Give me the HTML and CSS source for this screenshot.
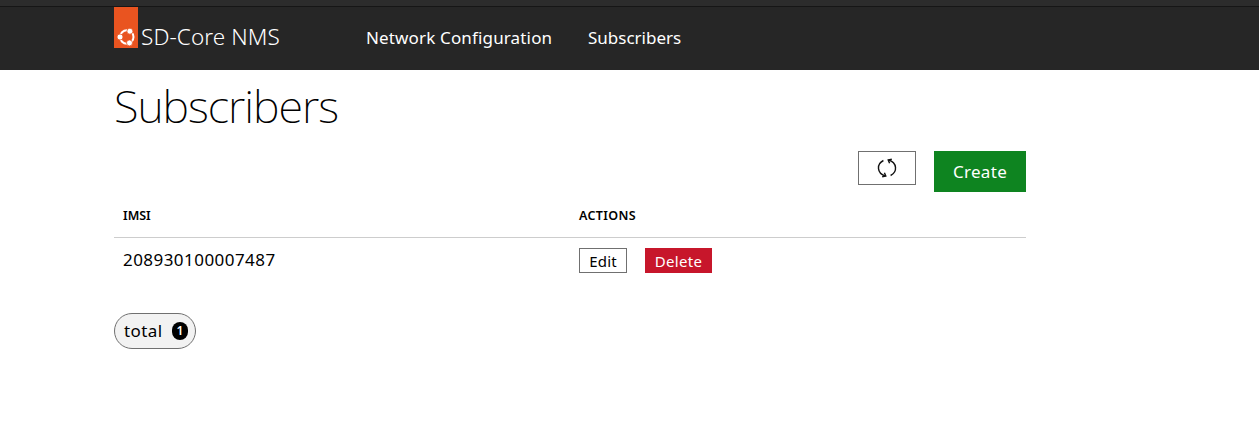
FILE: index.html
```html
<!DOCTYPE html>
<html lang="en">
<head>
<meta charset="utf-8">
<title>Subscribers</title>
<link rel="stylesheet" href="styles.css">
</head>
<body>
<div class="window-edge"></div>
<header class="navigation">
  <a class="brand">
    <span class="brand-tag">
      <svg width="20" height="20" viewBox="0 0 20 20">
        <circle cx="10.8" cy="10" r="6.7" fill="none" stroke="#fff" stroke-width="2"/>
        <g fill="#fff" stroke="#e95420" stroke-width="0.8">
          <circle cx="4" cy="10" r="3"/>
          <circle cx="13.9" cy="4.2" r="3"/>
          <circle cx="13.5" cy="15.9" r="3"/>
        </g>
      </svg>
    </span>
    <span class="brand-title">SD-Core NMS</span>
  </a>
  <nav class="links">
    <a class="link-network">Network Configuration</a>
    <a class="link-subscribers">Subscribers</a>
  </nav>
</header>
<main class="content">
  <h1>Subscribers</h1>
  <div class="toolbar">
    <button class="button refresh" aria-label="Refresh">
      <svg width="20" height="20" viewBox="0 0 20 20" fill="none" stroke="#111" stroke-width="1.4">
        <path d="M6.4 2.5C-.6 6-.4 15.4 8.6 18M13.6 17.5C20.6 14 20.4 4.6 11.4 2"/>
        <path d="M7.4 14.8L8.8 17.9L5.2 18.8M12.6 5.2L11.2 2.1L14.8 1.2"/>
      </svg>
    </button>
    <button class="button create"><span>Create</span></button>
  </div>
  <table class="table">
    <thead><tr><th class="th-imsi">IMSI</th><th class="th-actions">ACTIONS</th></tr></thead>
    <tbody><tr>
      <td><span class="imsi">208930100007487</span></td>
      <td><div class="actions"><button class="button small edit">Edit</button><button class="button small delete">Delete</button></div></td>
    </tr></tbody>
  </table>
  <div class="chip"><span class="chip-label">total</span><span class="badge">1</span></div>
</main>
</body>
</html>
```
FILE: styles.css
```css
* { box-sizing: border-box; }
body {
  margin: 0;
  background: #fff;
  color: #000;
  font-family: "Noto Sans", "Open Sans", sans-serif;
  font-size: 17px;
  line-height: 24px;
  white-space: nowrap;
}
.window-edge { height: 7px; background: #2c2c2c; border-bottom: 1px solid #161616; }
.navigation { display: flex; height: 63px; padding-left: 114px; background: #262626; color: #fff; }
.brand { display: flex; width: 252px; }
.brand-tag { display: flex; align-items: flex-end; justify-content: center; width: 24px; height: 41px; padding-bottom: 1px; background: #e95420; }
.brand-title { margin: 18px 0 0 3px; font-size: 22.5px; font-weight: 300; letter-spacing: 0.1px; }
.links { display: flex; padding-top: 19px; }
.link-network { width: 222px; letter-spacing: 0.15px; }
.content { width: 912px; margin-left: 114px; }
h1 { height: 81px; margin: 0; padding-top: 7px; font-size: 45px; line-height: 58px; font-weight: 250; letter-spacing: -1.05px; }
.toolbar { display: flex; justify-content: flex-end; align-items: flex-start; gap: 18px; height: 41px; }
.button { display: flex; align-items: center; justify-content: center; margin: 0; padding: 0; border: 1px solid #707070; background: #fff; color: #000; font: inherit; }
.refresh { width: 58px; height: 34px; }
.create { width: 92px; height: 41px; border-color: #0e8420; background: #0e8420; color: #fff; letter-spacing: 0.3px; }
.table { width: 100%; border-collapse: separate; border-spacing: 0; table-layout: fixed; }
th { height: 46px; padding: 2px 9px 0; border-bottom: 1px solid #cdcdcd; text-align: left; font-size: 12.5px; font-weight: 600; }
.th-actions { letter-spacing: 0.35px; }
td { height: 47px; padding: 10px 9px 0; vertical-align: top; }
.imsi { letter-spacing: 0.45px; }
.actions { display: flex; gap: 18px; }
.small { height: 25px; font-size: 15px; line-height: 22px; }
.edit { width: 48px; letter-spacing: 0.2px; }
.delete { width: 67px; border-color: #c7162b; background: #c7162b; color: #fff; letter-spacing: 0.3px; }
.chip { display: flex; align-items: center; justify-content: space-between; width: 82px; height: 36px; margin-top: 28px; padding: 0 7px 0 9px; border: 1px solid #707070; border-radius: 18px; background: #f2f2f2; }
.chip-label { letter-spacing: 0.4px; }
.badge { width: 16px; height: 18px; border-radius: 8px; background: #000; color: #fff; text-align: center; font-size: 12px; line-height: 18px; font-weight: 600; }
```
